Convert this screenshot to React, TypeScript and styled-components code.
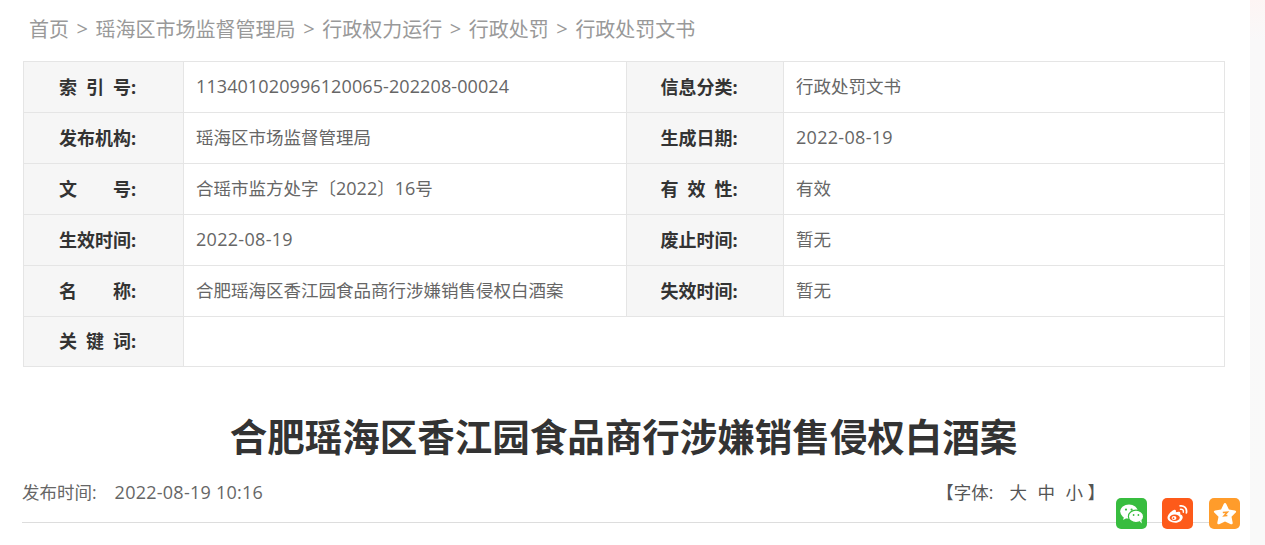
import React from 'react';
import styled, { createGlobalStyle } from 'styled-components';

const FONT = `"Open Sans", "Noto Sans CJK SC", sans-serif`;

const GlobalStyle = createGlobalStyle`
  html, body {
    margin: 0;
    padding: 0;
    height: 545px;
    overflow: hidden;
    background: #fbf9f9;
    font-family: ${FONT};
  }
`;

const Page = styled.div`
  position: relative;
  display: flex;
  width: 1265px;
  height: 545px;
  overflow: hidden;
`;

const Main = styled.main`
  width: 1250px;
  height: 545px;
  box-sizing: border-box;
  padding: 0 25px 0 22px;
  background: #fff;
`;

const Strip = styled.div`
  flex: 1;
  background: linear-gradient(180deg, #fdf5f4 0, #f9f8f9 40px, #f9f9f9 100%);
`;

const Crumbs = styled.nav`
  display: flex;
  align-items: center;
  height: 61px;
  padding: 0 0 4px 7px;
  box-sizing: border-box;
  font-size: 20px;
  color: #999;
  white-space: nowrap;
`;

const Sep = styled.span`
  width: 26.6px;
  text-align: center;
  font-size: 20px;
`;

const MetaTable = styled.div`
  display: grid;
  grid-template-columns: 160px 443px 157px 1fr;
  grid-template-rows: repeat(5, 51px) 50px;
  width: 1202px;
  margin-left: 1px;
  box-sizing: border-box;
  border-top: 1px solid #e5e5e5;
  border-left: 1px solid #e5e5e5;
`;

const Label = styled.div<{ $tight?: boolean }>`
  display: flex;
  align-items: center;
  justify-content: center;
  box-sizing: border-box;
  padding: 0 12px ${({ $tight }) => ($tight ? 4 : 3)}px 0;
  background: #f6f6f6;
  border-right: 1px solid #e5e5e5;
  border-bottom: 1px solid #e5e5e5;
  font-size: 18px;
  font-weight: 700;
  color: #333;
  white-space: pre;
`;

const LabelChar = styled.span<{ $gap: number }>`
  margin-right: ${({ $gap }) => $gap}px;
`;

const Value = styled.div<{ $span?: number }>`
  display: flex;
  align-items: center;
  box-sizing: border-box;
  padding: 0 0 3px 12px;
  grid-column: span ${({ $span }) => $span ?? 1};
  border-right: 1px solid #e5e5e5;
  border-bottom: 1px solid #e5e5e5;
  font-size: 17.5px;
  color: #666;
  white-space: pre;
`;

const Num = styled.span<{ $track?: number }>`
  font-size: 18px;
  letter-spacing: ${({ $track }) => $track ?? 0}px;
`;

const Title = styled.h1`
  margin: 42px 0 0;
  height: 56px;
  line-height: 56px;
  font-size: 37.5px;
  font-weight: 700;
  color: #333;
  text-align: center;
`;

const InfoBar = styled.div`
  display: flex;
  justify-content: space-between;
  align-items: flex-start;
  height: 58px;
  width: 1203px;
  box-sizing: border-box;
  padding: 14px 120px 0 0;
  border-bottom: 1px solid #ddd;
  font-size: 17.5px;
  line-height: 26px;
  color: #666;
`;

const Published = styled.span`
  display: flex;
  gap: 18px;
`;

const FontSizes = styled.span`
  display: flex;
  color: #555;
`;

const FontLabel = styled.span`
  margin-right: 16px;
`;

const SizeOption = styled.span`
  margin-right: 10.5px;
`;

const Share = styled.div`
  position: absolute;
  top: 498px;
  left: 1116px;
  display: flex;
  gap: 15px;
`;

const ShareButton = styled.a<{ $bg: string }>`
  display: flex;
  align-items: center;
  justify-content: center;
  width: 31px;
  height: 31px;
  border-radius: 5px;
  background: ${({ $bg }) => $bg};

  &:last-child {
    margin-left: 1px;
  }
`;

// a label is a list of characters, with the gap that follows each of them
const wide3 = (a: string, b: string, c: string) => (
  <>
    <LabelChar $gap={9}>{a}</LabelChar>
    <LabelChar $gap={9}>{b}</LabelChar>
    <span>{c}:</span>
  </>
);

const wide2 = (a: string, b: string) => (
  <>
    <LabelChar $gap={36}>{a}</LabelChar>
    <span>{b}:</span>
  </>
);

const DATE = <Num $track={0.3}>2022-08-19</Num>;

const rows: [React.ReactNode, React.ReactNode, React.ReactNode, React.ReactNode][] = [
  [wide3('索', '引', '号'), <Num $track={0.1}>113401020996120065-202208-00024</Num>, '信息分类:', '行政处罚文书'],
  ['发布机构:', '瑶海区市场监督管理局', '生成日期:', DATE],
  [wide2('文', '号'), <>合瑶市监方处字〔<Num>2022</Num>〕<Num>16</Num>号</>, wide3('有', '效', '性'), '有效'],
  ['生效时间:', DATE, '废止时间:', '暂无'],
  [wide2('名', '称'), '合肥瑶海区香江园食品商行涉嫌销售侵权白酒案', '失效时间:', '暂无'],
];

const crumbs = ['首页', '瑶海区市场监督管理局', '行政权力运行', '行政处罚', '行政处罚文书'];

function WechatIcon() {
  return (
    <svg width="24" height="20" viewBox="0 0 24 20" fill="#fff">
      <ellipse cx="9" cy="7.6" rx="8.8" ry="7.2" />
      <path d="M4 12l-.8 4 4.2-2.4z" />
      <ellipse cx="16" cy="12.4" rx="7.6" ry="6.2" stroke="#38bd3f" strokeWidth="1.2" />
      <path d="M19.4 17l2.4 2.6-.4-3.8z" />
      <circle cx="6" cy="5.6" r="1.1" fill="#38bd3f" />
      <circle cx="11.6" cy="5.6" r="1.1" fill="#38bd3f" />
      <circle cx="13.6" cy="11" r=".9" fill="#38bd3f" />
      <circle cx="18.4" cy="11" r=".9" fill="#38bd3f" />
    </svg>
  );
}

function WeiboIcon() {
  return (
    <svg width="23" height="20" viewBox="0 0 26 23" fill="none">
      <path
        d="M10.5 21.5c-5 0-9-2.4-9-5.6 0-3 3.6-7.5 7.4-9 1.9-.7 2.8.5 2.2 2.6 2.6-1 5.2-.9 5.2 1 0 .5-.1.9-.3 1.3 1.8.5 3 1.7 3 3.3 0 3.4-4 6.4-8.5 6.4z"
        fill="#fff"
      />
      <ellipse cx="9.8" cy="15.8" rx="5.8" ry="3.7" fill="#fd5a1a" />
      <ellipse cx="9" cy="16" rx="2.8" ry="2.3" fill="#fff" />
      <circle cx="8.4" cy="16.3" r="1" fill="#fd5a1a" />
      <path d="M16 2.2c4.4-.8 8.4 2.8 7.2 8" stroke="#fff" strokeWidth="2" strokeLinecap="round" />
      <path d="M16.4 6c2.2-.4 3.8 1.2 3.3 3.4" stroke="#fff" strokeWidth="1.7" strokeLinecap="round" />
    </svg>
  );
}

function QzoneIcon() {
  return (
    <svg width="26" height="26" viewBox="0 0 26 26">
      <path
        d="M13 2c.6 0 1 .4 1.3 1l2.6 5.6 6 .8c1.2.2 1.6 1.4.8 2.2l-4.2 4.2 1.2 6c.2 1.1-.9 1.9-1.9 1.4L13 20.4l-5.8 2.8c-1 .5-2.1-.3-1.9-1.4l1.2-6-4.2-4.2c-.8-.8-.4-2 .8-2.2l6-.8L11.7 3c.3-.6.7-1 1.3-1z"
        fill="#fff"
      />
      <path d="M10.8 11.6l4.6-.4-3.4 3.6 3.4-.2" fill="none" stroke="#ff9c2b" strokeWidth="1.5" />
    </svg>
  );
}

export default function App() {
  return (
    <>
      <GlobalStyle />
      <Page>
        <Main>
          <Crumbs>
            {crumbs.map((crumb, i) => (
              <React.Fragment key={crumb}>
                {i > 0 && <Sep>&gt;</Sep>}
                <span>{crumb}</span>
              </React.Fragment>
            ))}
          </Crumbs>
          <MetaTable>
            {rows.map(([a, b, c, d], i) => (
              <React.Fragment key={i}>
                <Label>{a}</Label>
                <Value>{b}</Value>
                <Label>{c}</Label>
                <Value>{d}</Value>
              </React.Fragment>
            ))}
            <Label $tight>{wide3('关', '键', '词')}</Label>
            <Value $span={3} />
          </MetaTable>
          <Title>合肥瑶海区香江园食品商行涉嫌销售侵权白酒案</Title>
          <InfoBar>
            <Published>
              <span>发布时间:</span>
              <Num $track={0.25}>2022-08-19 10:16</Num>
            </Published>
            <FontSizes>
              <FontLabel>【字体:</FontLabel>
              <SizeOption>大</SizeOption>
              <SizeOption>中</SizeOption>
              <span>小&nbsp;】</span>
            </FontSizes>
          </InfoBar>
        </Main>
        <Strip />
        <Share>
          <ShareButton $bg="#38bd3f"><WechatIcon /></ShareButton>
          <ShareButton $bg="#fd5a1a"><WeiboIcon /></ShareButton>
          <ShareButton $bg="#ff9c2b"><QzoneIcon /></ShareButton>
        </Share>
      </Page>
    </>
  );
}
